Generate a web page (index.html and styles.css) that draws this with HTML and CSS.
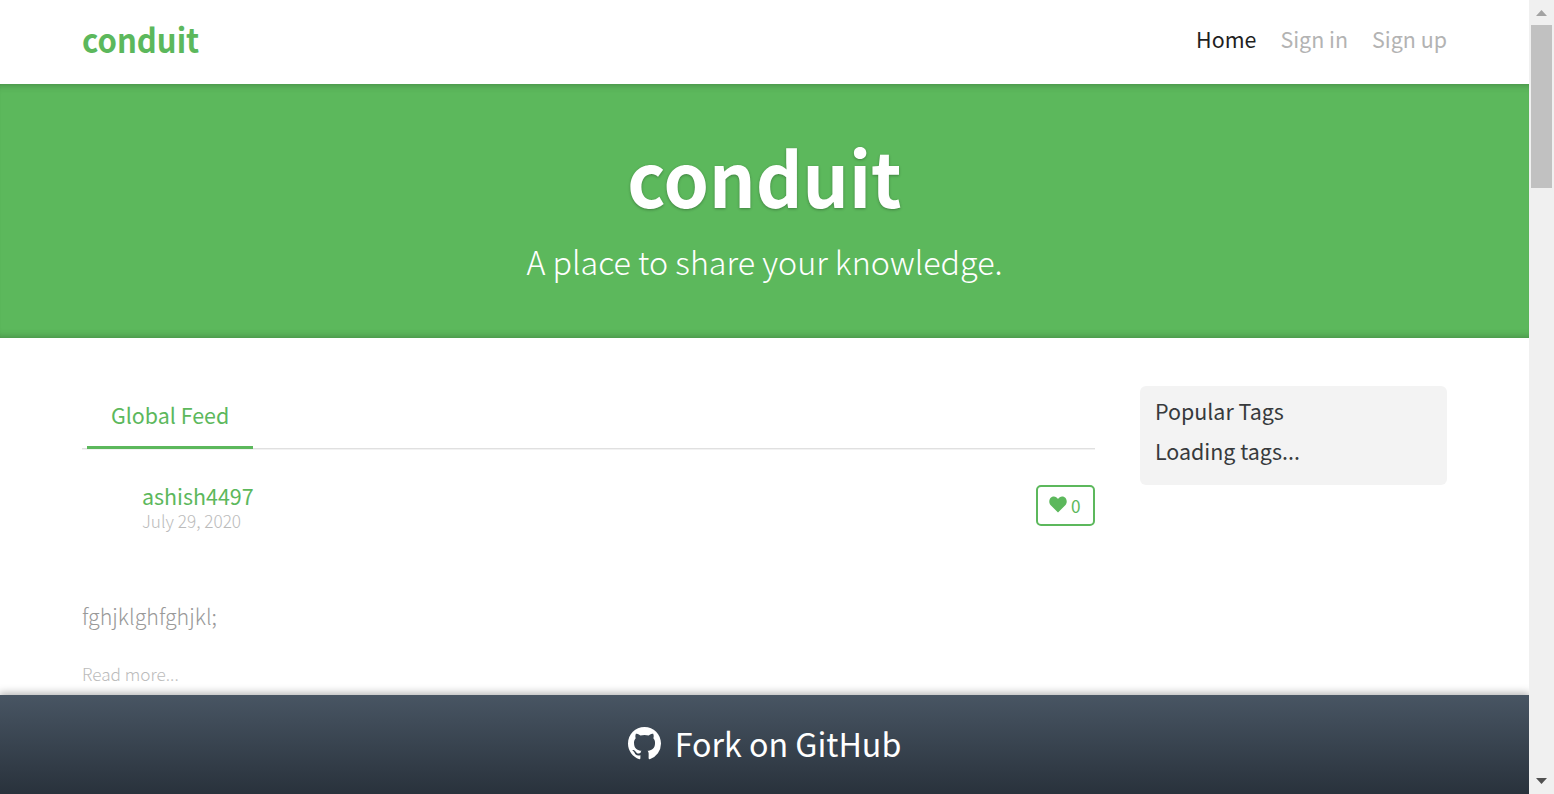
FILE: index.html
```html
<!DOCTYPE html>
<html lang="en">
<head>
<meta charset="utf-8">
<title>Conduit</title>
<link rel="stylesheet" href="styles.css">
</head>
<body>
<div class="window">
  <div class="app">
    <header class="navbar">
      <a class="brand">conduit</a>
      <nav class="nav">
        <a class="nav-link active home">Home</a>
        <a class="nav-link signin">Sign in</a>
        <a class="nav-link signup">Sign up</a>
      </nav>
    </header>
    <section class="banner">
      <h1 class="banner-title">conduit</h1>
      <p class="banner-text">A place to share your knowledge.</p>
    </section>
    <main class="page">
      <div class="feed">
        <div class="tabs"><a class="tab">Global Feed</a></div>
        <article class="preview">
          <div class="meta">
            <div class="info">
              <a class="author">ashish4497</a>
              <span class="date">July 29, 2020</span>
            </div>
            <button class="like"><svg class="heart" viewBox="0 0 18 17"><path d="M9 16.500L1.500 9C-.3 7 0 3.500 1.700 1.800C4-.5 7.400.2 9 2.900C10.600.2 14-.5 16.300 1.800C18 3.500 18.300 7 16.500 9Z"/></svg><span>0</span></button>
          </div>
          <p class="excerpt">fghjklghfghjkl;</p>
          <a class="more">Read more...</a>
        </article>
      </div>
      <aside class="sidebar">
        <p class="side-title">Popular Tags</p>
        <p class="side-note">Loading tags...</p>
      </aside>
    </main>
    <footer class="fork">
      <svg class="github" viewBox="0 0 16 16"><path d="M8 0C3.580 0 0 3.580 0 8c0 3.540 2.290 6.530 5.470 7.590.4.070.55-.17.55-.38 0-.19-.01-.82-.01-1.490-2.010.37-2.530-.49-2.690-.94-.09-.23-.48-.94-.82-1.130-.28-.15-.68-.52-.01-.53.63-.01 1.080.58 1.230.82.72 1.210 1.870.87 2.330.66.070-.52.28-.87.51-1.070-1.780-.2-3.640-.89-3.640-3.950 0-.87.31-1.590.82-2.150-.08-.2-.36-1.020.08-2.120 0 0 .67-.21 2.200.82.64-.18 1.320-.27 2-.27s1.360.09 2 .27c1.530-1.040 2.200-.82 2.200-.82.44 1.100.16 1.920.08 2.120.51.56.82 1.270.82 2.150 0 3.070-1.870 3.750-3.650 3.950.29.25.54.73.54 1.480 0 1.070-.01 1.930-.01 2.200 0 .21.15.46.55.38A8.010 8.010 0 0 0 16 8c0-4.420-3.580-8-8-8z"/></svg>
      <span class="fork-text">Fork on GitHub</span>
    </footer>
  </div>
  <div class="scrollbar">
    <svg class="arrow up" viewBox="0 0 11 6"><path d="M0 6L5.500 0L11 6Z"/></svg>
    <div class="thumb"></div>
    <svg class="arrow down" viewBox="0 0 11 6"><path d="M0 0L5.500 6L11 0Z"/></svg>
  </div>
</div>
</body>
</html>
```
FILE: styles.css
```css
* { box-sizing: border-box; }
body { margin: 0; background: #fff; color: #373a3c; font-family: "Noto Sans CJK SC", "Noto Sans", sans-serif; font-size: 21.45px; overflow: hidden; }
p, h1 { margin: 0; }
a, span, p, h1 { white-space: nowrap; }
.window { display: flex; width: 1554px; height: 794px; }
.app { width: 1529px; overflow: hidden; display: flex; flex-direction: column; }
.navbar { height: 84px; flex: none; padding: 0 82px; display: flex; justify-content: space-between; align-items: flex-start; }
.brand { color: #5cb85c; font-weight: 700; font-size: 33px; line-height: 50px; padding-top: 14px; transform: scaleX(.942); transform-origin: left; }
.nav { display: flex; gap: 24px; padding-top: 21px; }
.nav-link { color: #b3b3b3; line-height: 36px; }
.nav-link.active { color: #1f1f1f; }
.banner { height: 254px; flex: none; background: #5cb85c; box-shadow: inset 0 8px 8px -8px rgba(0,0,0,.3), inset 0 -8px 8px -8px rgba(0,0,0,.3); color: #fff; text-align: center; padding-top: 46px; }
.banner-title { font-size: 75px; line-height: 92px; font-weight: 700; transform: scaleX(.97); text-shadow: 0 1px 3px rgba(0,0,0,.3); }
.banner-text { font-size: 32.25px; font-weight: 300; line-height: 54px; padding-top: 12px; height: 66px; }
.page { flex: 1; min-height: 0; overflow: hidden; padding: 48px 82px 0; display: flex; justify-content: space-between; align-items: flex-start; }
.feed { width: 1013px; }
.tabs { height: 63px; margin-bottom: 1px; border-bottom: 1px solid #e0e0e0; box-shadow: 0 1px #f2f2f2; padding-left: 5px; display: flex; }
.tab { width: 166px; height: 63px; flex: none; border-bottom: 3px solid #5cb85c; color: #5cb85c; line-height: 36px; padding: 11px 24px 0; }
.meta { display: flex; justify-content: space-between; padding: 35px 0 0 60px; height: 131px; align-items: flex-start; }
.info { display: flex; flex-direction: column; margin-top: -1px; }
.author { color: #5cb85c; line-height: 24px; }
.date { color: #bbb; font-weight: 300; font-size: 17.2px; line-height: 25px; }
.like { width: 59px; height: 41px; border: 2px solid #5cb85c; border-radius: 5px; background: #fff; color: #5cb85c; display: flex; align-items: center; gap: 4px; padding: 0 0 0 11px; font: 400 17.2px/24px "Noto Sans CJK SC", sans-serif; }
.heart { width: 18px; height: 17px; fill: currentColor; margin-top: -2px; }
.excerpt { color: #999; font-weight: 300; line-height: 36px; padding-top: 17px; }
.more { display: block; color: #bbb; font-weight: 300; font-size: 17.2px; line-height: 30px; margin-top: 25px; }
.sidebar { width: 307px; height: 99px; background: #f3f3f3; border-radius: 6px; padding: 7px 15px; }
.side-title { line-height: 36px; height: 40px; }
.side-note { line-height: 36px; }
.fork { height: 99px; flex: none; position: relative; background: linear-gradient(#485563, #29323c); color: #fff; box-shadow: 0 -1px 8px 1px rgba(0,0,0,.3); display: flex; justify-content: center; align-items: center; gap: 14px; }
.github { width: 33px; height: 33px; fill: #fff; margin-top: -3px; }
.fork-text { font-size: 32.2px; line-height: 50px; margin-top: -3px; }
.scrollbar { width: 25px; background: #f0f0f0; display: flex; flex-direction: column; align-items: center; padding: 10px 0; }
.arrow { width: 11px; height: 6px; }
.up { fill: #a3a3a3; }
.down { fill: #505050; margin-top: auto; }
.thumb { width: 21px; height: 163px; margin-top: 9px; background: #c1c1c1; }
```
